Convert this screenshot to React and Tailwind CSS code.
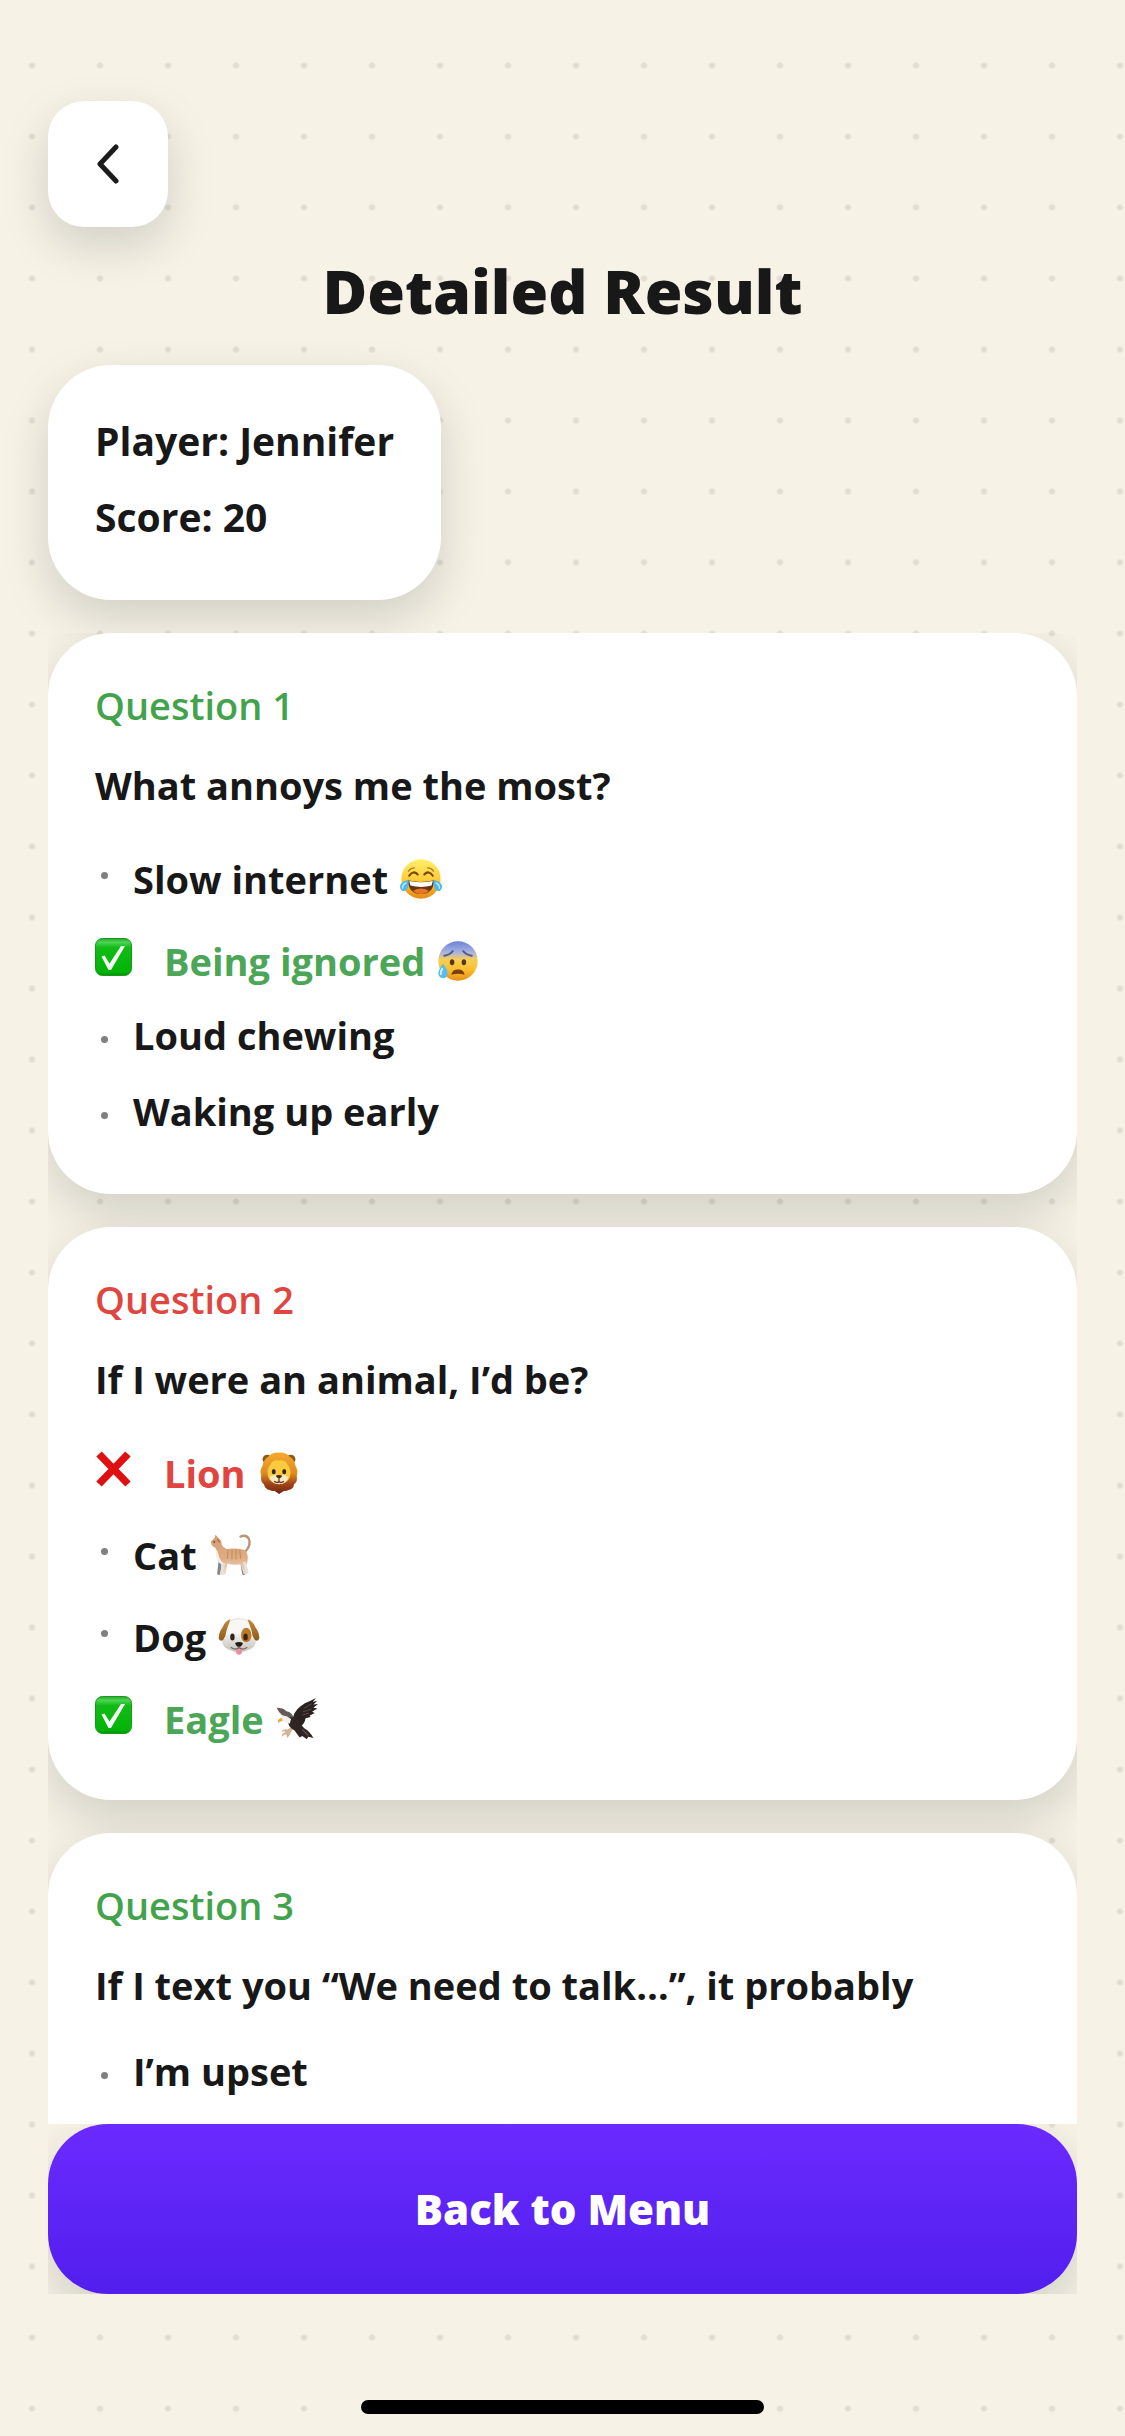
/**
 * DetailedResult - Quiz result screen: player summary, answers per question
 * and a button that leads back to the menu
 */

const JoyEmoji = () => (
  <svg viewBox="0 0 64 64" className="h-full w-full" role="img" aria-label="Tears of joy">
    <defs>
      <linearGradient id="joyFace" x1="0" y1="0" x2="0" y2="1">
        <stop offset="0" stopColor="#fff06a" />
        <stop offset="0.55" stopColor="#fcc936" />
        <stop offset="1" stopColor="#e48a16" />
      </linearGradient>
    </defs>
    <circle cx="32" cy="32" r="30" fill="url(#joyFace)" />
    <path d="M14 27q6-9 13-2M37 25q7-7 13 2" fill="none" stroke="#7a4410" strokeWidth="3.2" strokeLinecap="round" />
    <path d="M22 15q-6 0-9 5M42 15q6 0 9 5" fill="none" stroke="#b9741a" strokeWidth="2" strokeLinecap="round" />
    <path d="M12 34q20 5 40 0q-1 21-20 21T12 34z" fill="#6a3510" />
    <path d="M14 35q18 4 36 0l-2 7q-16 4-32 0z" fill="#fff" />
    <path d="M20 50q12-7 24 0q-5 5-12 5t-12-5z" fill="#e8752a" />
    <path d="M13 33q-13 3-13 11q1 7 7 6q7-2 6-17zM51 33q13 3 13 11q-1 7-7 6q-7-2-6-17z" fill="#4db8ea" />
    <path d="M9 38q-6 3-5 8M55 38q6 3 5 8" fill="none" stroke="#b5e7fb" strokeWidth="2.4" strokeLinecap="round" />
  </svg>
)

const SweatEmoji = () => (
  <svg viewBox="0 0 64 64" className="h-full w-full" role="img" aria-label="Anxious face with sweat">
    <defs>
      <linearGradient id="sweatFace" x1="0" y1="0" x2="0" y2="1">
        <stop offset="0" stopColor="#6b83d8" />
        <stop offset="0.28" stopColor="#a9b3e0" />
        <stop offset="0.46" stopColor="#f5ce58" />
        <stop offset="0.7" stopColor="#fbc02f" />
        <stop offset="1" stopColor="#ea8f18" />
      </linearGradient>
    </defs>
    <circle cx="32" cy="32" r="30" fill="url(#sweatFace)" />
    <path d="M11 24q8-1 13-7M53 24q-8-1-13-7" fill="none" stroke="#4e5a8c" strokeWidth="3" strokeLinecap="round" />
    <ellipse cx="23" cy="34" rx="3.4" ry="4.6" fill="#5c3410" />
    <ellipse cx="41" cy="34" rx="3.4" ry="4.6" fill="#5c3410" />
    <path d="M22 53q1-8 10-8t10 8q-10-3-20 0z" fill="#7a3c10" />
    <path d="M9 36q9 10 7 17q-2 6-8 5q-6-1-6-8q1-6 7-14z" fill="#56bdee" />
    <path d="M8 44q-3 4-2 8" fill="none" stroke="#d4f2fd" strokeWidth="3" strokeLinecap="round" />
  </svg>
)

const LionEmoji = () => (
  <svg viewBox="0 0 64 64" className="h-full w-full" role="img" aria-label="Lion">
    <defs>
      <linearGradient id="lionMane" x1="0" y1="0" x2="0" y2="1">
        <stop offset="0" stopColor="#f5ab2c" />
        <stop offset="0.5" stopColor="#de8a22" />
        <stop offset="0.75" stopColor="#a4461a" />
        <stop offset="1" stopColor="#6d2410" />
      </linearGradient>
    </defs>
    <circle cx="14" cy="11" r="7" fill="#8a5a1c" />
    <circle cx="50" cy="11" r="7" fill="#8a5a1c" />
    <path d="M32 1q10-1 16 6q8 5 9 14q5 8 2 15q2 9-4 13q-1 8-9 9q-3 2-6 1l-8 5l-7-5q-4 1-7-1q-7-1-9-9q-6-5-4-13q-3-8 2-15q1-9 9-14q6-7 16-6z" fill="url(#lionMane)" />
    <path d="M32 13q9-2 13 6q6 7 4 17q-2 11-17 12q-15-1-17-12q-2-10 4-17q4-8 13-6z" fill="#fccb3d" />
    <path d="M18 38q7-5 14-1q7-4 14 1q-1 11-14 11t-14-11z" fill="#fbe9c4" />
    <ellipse cx="24" cy="30" rx="3" ry="4" fill="#3a2412" />
    <ellipse cx="40" cy="30" rx="3" ry="4" fill="#3a2412" />
    <path d="M27 36q5-2 10 0q-2 4-5 4t-5-4z" fill="#4a2614" />
    <path d="M32 40v5M25 45q4 3 7 0q3 3 7 0" fill="none" stroke="#6b3a1c" strokeWidth="2" strokeLinecap="round" />
  </svg>
)

const CatEmoji = () => (
  <svg viewBox="0 0 64 64" className="h-full w-full" role="img" aria-label="Cat">
    <defs>
      <linearGradient id="catBody" x1="0" y1="0" x2="0" y2="1">
        <stop offset="0" stopColor="#d39a6c" />
        <stop offset="0.6" stopColor="#dfae84" />
        <stop offset="1" stopColor="#f1e3d6" />
      </linearGradient>
    </defs>
    <path d="M55 27q9-9 6-19q-4-8-13-4" fill="none" stroke="#bd9273" strokeWidth="3.6" strokeLinecap="round" />
    <path d="M17 42l-2 18M50 42l3 18" fill="none" stroke="#84868a" strokeWidth="5" strokeLinecap="round" />
    <path d="M3 11l5-4l2-6l5 6q5 3 4 9q2 5 8 7q14-2 26 1q7 4 6 14q0 6-3 11l3 11l-6 1l-5-15q-12 2-20-1l-3 17h-6l1-18q-8-4-9-14q0-6-1-9q-7-2-7-10z" fill="url(#catBody)" />
    <path d="M10 22q4 4 5 12q2 7 9 12l-5 1q-9-6-9-25z" fill="#f7efe8" />
    <path d="M22 46l-3 14M54 44l4 14" fill="none" stroke="#e6e1dc" strokeWidth="4.4" strokeLinecap="round" />
    <path d="M29 25l-1 12M35 24v14M41 24v14M47 25l1 12" fill="none" stroke="#c08355" strokeWidth="1.4" strokeLinecap="round" />
    <circle cx="8" cy="12" r="1.4" fill="#4b5a44" />
    <path d="M13 8l3 5" stroke="#9c7253" strokeWidth="2" />
  </svg>
)

const DogEmoji = () => (
  <svg viewBox="0 0 64 64" className="h-full w-full" role="img" aria-label="Dog">
    <defs>
      <linearGradient id="dogEar" x1="0" y1="0" x2="0" y2="1">
        <stop offset="0" stopColor="#c58a3c" />
        <stop offset="1" stopColor="#8f5a1c" />
      </linearGradient>
      <linearGradient id="dogFace" x1="0" y1="0" x2="0" y2="1">
        <stop offset="0.4" stopColor="#f8f7f5" />
        <stop offset="1" stopColor="#c4beb7" />
      </linearGradient>
    </defs>
    <path d="M32 4q15 0 19 12q3 9 6 20q1 13-13 16q-6 3-12 3t-12-3q-14-3-13-16q3-11 6-20q4-12 19-12z" fill="url(#dogFace)" stroke="#d3cec8" />
    <path d="M19 5q-8 2-12 12q-6 8-6 17q2 6 7 2q4-5 5-14q3-9 6-17zM45 5q8 2 12 12q6 8 6 17q-2 6-7 2q-4-5-5-14q-3-9-6-17z" fill="url(#dogEar)" />
    <ellipse cx="43" cy="29" rx="8" ry="11" fill="#b97a2c" />
    <ellipse cx="22" cy="32" rx="3.4" ry="5.4" fill="#2e241d" />
    <ellipse cx="42" cy="32" rx="3.4" ry="5.4" fill="#3a2413" />
    <path d="M26 41q6-3 12 0q-2 6-6 6t-6-6z" fill="#1f1b19" />
    <path d="M20 48q7 5 12 0q5 5 12 0" fill="none" stroke="#6d655e" strokeWidth="1.8" strokeLinecap="round" />
    <path d="M27 50q5 3 10 0l-1 7q-4 4-8 0z" fill="#ee8ba4" />
  </svg>
)

const EagleEmoji = () => (
  <svg viewBox="0 0 64 64" className="h-full w-full" role="img" aria-label="Eagle">
    {/* Far wing, near wing, body with tail */}
    <path d="M1 15q9 0 15 5q9 1 12 13l-8 3q-4-8-11-10q-5-4-8-11z" fill="#625b58" />
    <path d="M25 36q1-15 12-23q7-6 14-8l10-5l-5 6l7-2l-6 6l7-1l-7 6l6 1l-8 5l4 2l-8 4l2 2l-8 2q-1 8-8 13z" fill="#292220" />
    <path d="M17 30q12-3 18 5q3 6 8 11q9 5 14 15l-8-2l-2 4l-7-5l-4 2l-8-11q-10-3-11-19z" fill="#2f2623" />
    {/* Head and beak */}
    <path d="M5 32q3-7 12-4l6 4l-2 7q-7-1-9-4q-3 0-7-3z" fill="#f2efeb" />
    <path d="M9 31q-7 0-6 7q3-3 7-3z" fill="#e6a836" />
    {/* Talons */}
    <path d="M18 48q-7-2-10 3q5-1 7 1q-7 1-6 7q4-4 7-3l1 5q5-4 6-10l2-2l-3-4z" fill="#d5b391" />
    <path d="M42 16l12-7M41 21l13-4M40 26l10-3" stroke="#5a504c" strokeWidth="1.4" />
    <path d="M40 48l9 9" stroke="#6c625d" strokeWidth="1.6" />
  </svg>
)

const CheckMark = () => (
  <svg viewBox="0 0 37 38" className="h-[38px] w-[37px]" role="img" aria-label="Correct">
    <defs>
      <linearGradient id="checkBox" x1="0" y1="0" x2="0" y2="1">
        <stop offset="0" stopColor="#27a52c" />
        <stop offset="0.1" stopColor="#4fd453" />
        <stop offset="0.24" stopColor="#12bb18" />
        <stop offset="0.9" stopColor="#02b406" />
        <stop offset="1" stopColor="#0a8f10" />
      </linearGradient>
    </defs>
    <rect x="0.5" y="0.5" width="36" height="37" rx="7" fill="url(#checkBox)" stroke="#159a1c" />
    <path d="M6.500 18.500l3-1l5 8l11.500-17.500h4L16 32h-2.500z" fill="#f4fff2" />
  </svg>
)

const CrossMark = () => (
  <svg viewBox="0 0 37 38" className="h-[38px] w-[37px]" role="img" aria-label="Wrong">
    <path d="M4 4L33 34M33 4L4 34" stroke="#df1010" strokeWidth="7.500" />
  </svg>
)

const EMOJIS = {
  joy: JoyEmoji,
  sweat: SweatEmoji,
  lion: LionEmoji,
  cat: CatEmoji,
  dog: DogEmoji,
  eagle: EagleEmoji,
}

const QUESTIONS = [
  {
    id: 1,
    correct: true,
    text: 'What annoys me the most?',
    options: [
      { label: 'Slow internet', emoji: 'joy' },
      { label: 'Being ignored', emoji: 'sweat', status: 'correct' },
      { label: 'Loud chewing' },
      { label: 'Waking up early' },
    ],
  },
  {
    id: 2,
    correct: false,
    text: 'If I were an animal, I’d be?',
    options: [
      { label: 'Lion', emoji: 'lion', status: 'wrong' },
      { label: 'Cat', emoji: 'cat' },
      { label: 'Dog', emoji: 'dog' },
      { label: 'Eagle', emoji: 'eagle', status: 'correct' },
    ],
  },
  {
    id: 3,
    correct: true,
    text: 'If I text you “We need to talk…”, it probably',
    options: [{ label: 'I’m upset' }],
  },
]

const Option = ({ label, emoji, status }) => {
  const Emoji = emoji ? EMOJIS[emoji] : null

  return (
    <li className={`flex items-start ${Emoji ? 'mb-[14px] h-[68px]' : 'mb-4 h-[60px]'}`}>
      {/* Mark: tick, cross or plain bullet */}
      <span className={`flex h-[68px] shrink-0 items-center ${status ? 'w-[69px]' : 'w-[38px]'}`}>
        {status === 'correct' && <CheckMark />}
        {status === 'wrong' && <CrossMark />}
        {!status && <span className="ml-[6px] h-[7px] w-[7px] rounded-full bg-[#808080]" />}
      </span>
      <span
        className={`flex h-[60px] items-center gap-3 font-bold ${Emoji ? 'mt-2' : ''} ${
          status === 'correct'
            ? 'text-[#4ca657]'
            : status === 'wrong'
              ? 'text-[#e0463f]'
              : 'text-[#181818]'
        }`}
      >
        {label}
        {Emoji && (
          <span className="h-[42px] w-[42px] shrink-0">
            <Emoji />
          </span>
        )}
      </span>
    </li>
  )
}

const QuestionCard = ({ question }) => (
  <article className="mb-[33px] min-h-[560px] rounded-[63px] bg-white px-[47px] pt-[42px] pb-[37px] shadow-[0_18px_48px_rgba(0,0,0,0.15)]">
    <h2 className={`mb-5 font-semibold ${question.correct ? 'text-[#43a34d]' : 'text-[#e0463f]'}`}>
      Question {question.id}
    </h2>
    <p className="mb-[26px] font-bold">{question.text}</p>
    <ul>
      {question.options.map((option) => (
        <Option key={option.label} {...option} />
      ))}
    </ul>
  </article>
)

const App = () => {
  return (
    <main className="flex h-screen flex-col bg-[#f6f2e6] bg-[radial-gradient(circle_at_center,#e2ddd1_2px,transparent_4px)] bg-[length:68px_71px] bg-[position:-2px_30px] px-12 pt-[101px] font-['Open_Sans',sans-serif] text-[38px] leading-[60px] text-[#181818]">
      <button
        type="button"
        aria-label="Back"
        className="flex h-[126px] w-[120px] shrink-0 items-center justify-center rounded-[36px] bg-white shadow-[0_18px_48px_rgba(0,0,0,0.15)]"
      >
        <svg viewBox="0 0 22 40" className="h-10 w-[22px]" fill="none" stroke="#1c1c1c" strokeWidth="5" strokeLinecap="round" strokeLinejoin="round">
          <path d="M19 3L3 20l16 17" />
        </svg>
      </button>

      <h1 className="mt-6 mb-[34px] text-center text-[61px] leading-[80px] font-extrabold">Detailed Result</h1>

      {/* Player summary */}
      <section className="mb-[33px] self-start rounded-[63px] bg-white px-[47px] pt-[46px] pb-[37px] text-[39px] font-bold shadow-[0_18px_48px_rgba(0,0,0,0.15)]">
        <p className="mb-4">Player: Jennifer</p>
        <p className="mb-4">Score: 20</p>
      </section>

      <div className="min-h-0 flex-1 overflow-hidden">
        {QUESTIONS.map((question) => (
          <QuestionCard key={question.id} question={question} />
        ))}
      </div>

      <div className="shrink-0 overflow-hidden">
        <button
          type="button"
          className="block h-[170px] w-full rounded-[60px] bg-linear-to-b from-[#6b2aff] to-[#511eee] text-[42px] font-extrabold text-white shadow-[0_18px_48px_rgba(0,0,0,0.15)]"
        >
          Back to Menu
        </button>
      </div>

      {/* Home indicator */}
      <div className="mt-[106px] mb-[22px] h-[14px] w-[403px] shrink-0 self-center rounded-full bg-black" />
    </main>
  )
}

export default App
